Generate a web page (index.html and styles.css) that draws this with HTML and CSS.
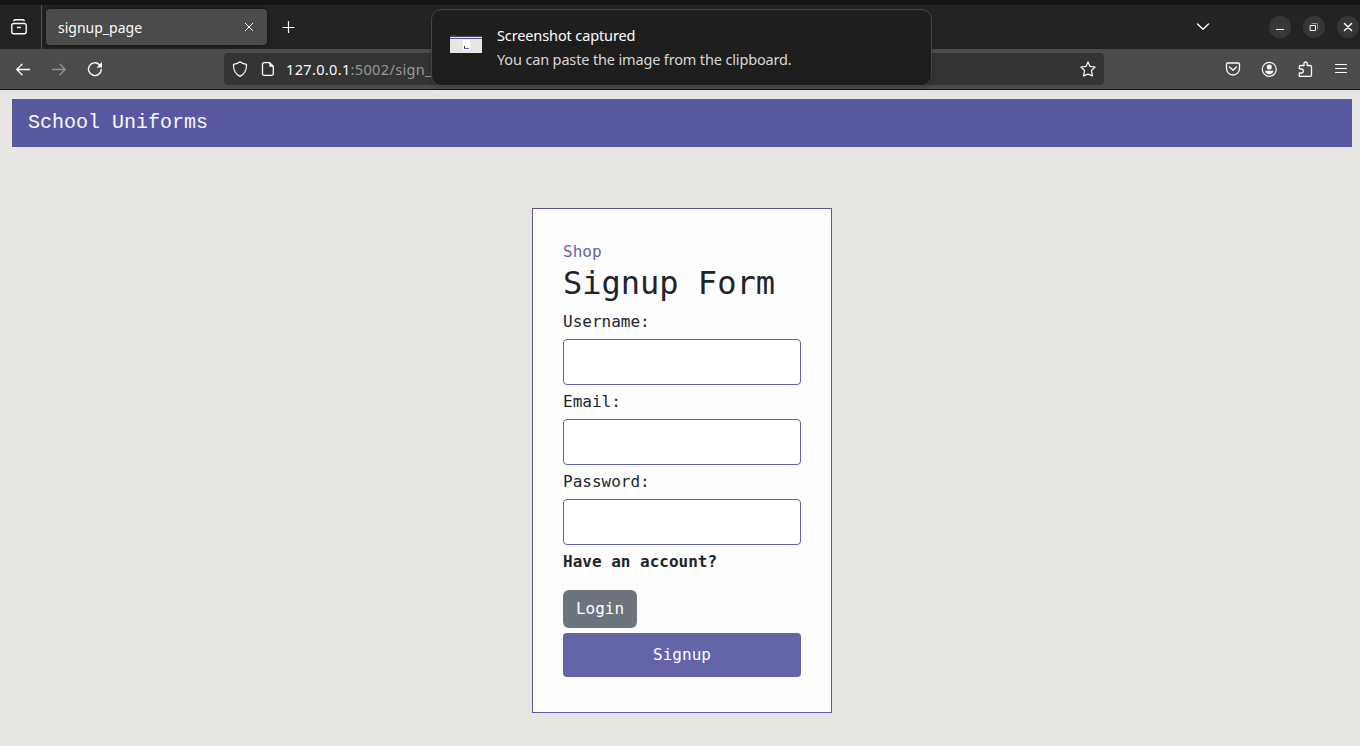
FILE: index.html
```html
<!DOCTYPE html>
<html lang="en">
<head>
<meta charset="utf-8">
<title>signup_page</title>
<link rel="stylesheet" href="styles.css">
</head>
<body>
<div class="window">
  <div class="desktop-edge"></div>
  <div class="tabbar">
    <div class="tab-overview">
      <svg class="icon" width="18" height="18" viewBox="0 0 18 18"><path d="M3.800 5.500h10.400a2 2 0 0 1 2 2v6.300a2 2 0 0 1-2 2H3.800a2 2 0 0 1-2-2V7.500a2 2 0 0 1 2-2z" stroke-width="1.400"/><path d="M3.800 2.700c.3-.6.800-.9 1.500-.9h7.400c.7 0 1.200.3 1.500.9M7.500 9.500h3" stroke-width="1.400"/></svg>
    </div>
    <div class="tab">
      <span class="tab-title">signup_page</span>
      <svg class="icon" width="10" height="10" viewBox="0 0 10 10"><path d="M1.300 1.300l7.400 7.400M8.700 1.300L1.300 8.700" stroke-width="1"/></svg>
    </div>
    <svg class="icon new-tab" width="14" height="14" viewBox="0 0 14 14"><path d="M6.500 1.500v11M1 7.500h11" stroke-width="1.200"/></svg>
    <div class="spacer"></div>
    <svg class="icon tab-list" width="14" height="10" viewBox="0 0 14 10"><path d="M1.500 2L7 7.300 12.500 2" stroke-width="1.400"/></svg>
    <div class="window-buttons">
      <span class="window-button"><svg class="icon" width="22" height="22" viewBox="0 0 22 22"><path d="M7 13.500h8" stroke-linecap="butt"/></svg></span>
      <span class="window-button"><svg class="icon" width="22" height="22" viewBox="0 0 22 22"><path d="M9 7.500h5.500V13" class="dim"/><path d="M7.500 9.500h5v5h-5z" stroke-linejoin="miter"/></svg></span>
      <span class="window-button"><svg class="icon" width="22" height="22" viewBox="0 0 22 22"><path d="M7.500 7.500l7 7M14.500 7.500l-7 7" stroke-width="1.500"/></svg></span>
    </div>
  </div>
  <div class="toolbar">
    <div class="nav-buttons">
      <svg class="icon" width="16" height="16" viewBox="0 0 16 16"><path d="M14.500 8.500H1.800M7 3.300L1.700 8.500 7 13.700" stroke-width="1.300"/></svg>
      <svg class="icon disabled" width="16" height="16" viewBox="0 0 16 16"><path d="M1.500 8.500h12.700M9 3.300l5.300 5.200L9 13.700" stroke-width="1.300"/></svg>
      <svg class="icon" width="16" height="16" viewBox="0 0 16 16"><path d="M14.300 8.500A6.400 6.400 0 1 1 12.300 3.500" stroke-width="1.400"/><path d="M15 1v5.500H9.500z" class="solid"/></svg>
    </div>
    <div class="urlbar">
      <svg class="icon" width="16" height="16" viewBox="0 0 16 16"><path d="M8 .8c1.600 1.500 3.800 2.200 6.500 2.500C14.700 9 12.700 13.200 8 15.400 3.300 13.200 1.300 9 1.500 3.300 4.200 3 6.400 2.300 8 .8z" stroke-width="1.200"/></svg>
      <svg class="icon page-icon" width="14" height="16" viewBox="0 0 14 16"><path d="M3 1.700h5.700l3.600 3.600v7.500a1.500 1.500 0 0 1-1.500 1.500H3a1.500 1.500 0 0 1-1.500-1.500V3.200A1.500 1.500 0 0 1 3 1.700z" stroke-width="1.300"/><path d="M8.300 1.500l4.200 4.200H8.300z" class="solid"/></svg>
      <span class="url">127.0.0.1<span class="url-path">:5002/sign_up</span></span>
      <svg class="icon" width="18" height="18" viewBox="0 0 18 18"><path d="M9 1.900l2 4.500 5.100.6-3.700 3.500 1 5.400L9 14.100l-4.400 1.800 1-5.400L1.900 7l5.100-.6z" stroke-width="1.200"/></svg>
    </div>
    <div class="tool-buttons">
      <svg class="icon" width="16" height="16" viewBox="0 0 16 16"><path d="M2.700 2h10.600a1.200 1.200 0 0 1 1.200 1.200v4.300a6.500 6.500 0 0 1-13 0V3.200A1.200 1.200 0 0 1 2.700 2zM4.500 6L8 9.300 11.500 6" stroke-width="1.300"/></svg>
      <svg class="icon" width="16" height="16" viewBox="0 0 16 16"><circle cx="8.300" cy="8.300" r="7" stroke-width="1.200"/><circle cx="8.300" cy="6" r="2.600" class="solid"/><path d="M4.200 9.700h8.200C12.200 12 10.600 13.200 8.300 13.200S4.400 12 4.200 9.700z" class="solid"/></svg>
      <svg class="icon" width="16" height="16" viewBox="0 0 16 16"><path d="M2.300 7.500V5.700c0-.7.400-1.200 1.200-1.200H7V2.600a1.600 1.600 0 0 1 3.200 0v1.900h3c.8 0 1.300.5 1.300 1.200v8.400c0 .8-.5 1.200-1.300 1.200H2.300v-3.300h2a2 2 0 0 0 0-4z" stroke-width="1.300"/></svg>
      <svg class="icon" width="16" height="16" viewBox="0 0 16 16"><path d="M2.500 3.500h11M2.500 7.500h11M2.500 11.500h11" stroke-width="1.200"/></svg>
    </div>
  </div>
  <div class="page">
    <nav class="navbar">School Uniforms</nav>
    <form class="card">
      <a class="shop-link">Shop</a>
      <h2 class="heading">Signup Form</h2>
      <label class="label" for="username">Username:</label>
      <input class="field" id="username" type="text">
      <label class="label" for="email">Email:</label>
      <input class="field" id="email" type="email">
      <label class="label" for="password">Password:</label>
      <input class="field" id="password" type="password">
      <p class="question">Have an account?</p>
      <button class="login" type="button">Login</button>
      <button class="signup" type="button">Signup</button>
    </form>
  </div>
  <div class="notification">
    <svg class="thumbnail" width="32" height="18" viewBox="0 0 32 18" shape-rendering="crispEdges"><rect width="32" height="18" fill="#e8e6e2"/><rect width="32" height="2" fill="#242424"/><rect y="1" width="32" height="1" fill="#444"/><rect x="1" width="5" height="1" fill="#4b4b4b"/><rect y="3" width="32" height="1" fill="#5959a2"/><rect x="13" y="5" width="7" height="10" fill="#fff"/><rect x="14" y="11" width="1" height="2" fill="#29313a"/><rect x="14" y="13" width="5" height="1" fill="#6464a8"/></svg>
    <div class="notification-text">
      <div class="notification-title">Screenshot captured</div>
      <div class="notification-body">You can paste the image from the clipboard.</div>
    </div>
  </div>
</div>
</body>
</html>
```
FILE: styles.css
```css
* { box-sizing: border-box; }
body { margin: 0; }

.window {
  position: relative;
  display: flex;
  flex-direction: column;
  height: 746px;
  overflow: hidden;
  background: #e8e6e2;
  font-family: "Noto Sans", "Open Sans", sans-serif;
  color: #fbfbfe;
}
.desktop-edge { height: 5px; background: #141414; }
.icon {
  display: block;
  flex: none;
  fill: none;
  stroke: #fbfbfe;
  stroke-linecap: round;
  stroke-linejoin: round;
}
.icon .solid { fill: #fbfbfe; stroke: none; }
.icon .dim { stroke: #8c8c8c; }
.icon.disabled { opacity: .4; }
.spacer { flex: 1; }

.tabbar {
  display: flex;
  align-items: center;
  height: 44px;
  background: #232323;
}
.tab-overview {
  display: flex;
  align-items: center;
  width: 42px;
  height: 44px;
  padding-left: 10px;
  border-right: 1px solid #555;
}
.tab {
  display: flex;
  align-items: center;
  justify-content: space-between;
  width: 221px;
  height: 36px;
  margin-left: 4px;
  padding: 0 13px 0 12px;
  border-radius: 4px;
  background: #4b4b4b;
  box-shadow: 0 0 4px rgba(0, 0, 0, .5);
}
.tab-title { padding-top: 1px; font-size: 14px; }
.new-tab { margin-left: 15px; }
.tab-list { margin-right: 59px; }
.window-buttons { display: flex; gap: 12px; padding-right: 1px; }
.window-button { display: block; border-radius: 50%; background: #373737; }

.toolbar {
  display: flex;
  align-items: center;
  height: 41px;
  background: #4b4b4b;
  border-bottom: 1px solid #1c1520;
}
.nav-buttons { display: flex; gap: 20px; padding-left: 15px; }
.urlbar {
  display: flex;
  align-items: center;
  width: 880px;
  height: 32px;
  margin-left: 121px;
  padding: 0 7px 0 8px;
  border-radius: 4px;
  background: #343434;
}
.page-icon { margin-left: 13px; }
.url { flex: 1; padding-left: 11px; font-size: 14.5px; letter-spacing: .35px; }
.url-path { color: #98989b; }
.tool-buttons { display: flex; gap: 20px; margin-left: 121px; }

.page { flex: 1; padding: 9px 8px 0 12px; }
.navbar {
  height: 48px;
  padding-left: 16px;
  background: #5959a2;
  color: #f8f9fa;
  font: 20px/48px "Liberation Mono", monospace;
}
.card {
  display: flex;
  flex-direction: column;
  width: 300px;
  height: 505px;
  margin: 61px auto 0;
  padding: 31px 30px 30px;
  border: 1px solid #5959a2;
  background: #fdfdfd;
  color: #212529;
  font: 16px/24px "DejaVu Sans Mono", monospace;
}
.shop-link { color: #6464a8; }
.heading { margin: 0 0 8px; font-size: 32px; line-height: 38px; font-weight: 400; }
.field {
  width: 100%;
  height: 46px;
  margin: 5px 0;
  border: 1px solid #6464a8;
  border-radius: 4px;
  background: #fff;
}
.question { margin: 0 0 16px; font-weight: 700; }
.login, .signup { padding: 0; border: 0; color: #fff; font: inherit; }
.login { width: 74px; height: 38px; border-radius: 6px; background: #6c757d; }
.signup { height: 44px; margin-top: 5px; border-radius: 4px; background: #6464a8; }

.notification {
  position: absolute;
  top: 9px;
  left: 431px;
  display: flex;
  align-items: center;
  width: 501px;
  height: 77px;
  padding-left: 18px;
  border: 1px solid #464646;
  border-radius: 10px;
  background: #1e1e1e;
  box-shadow: 0 1px 4px rgba(0, 0, 0, .2);
}
.thumbnail { display: block; margin-top: -8px; }
.notification-text { padding: 0 0 2px 15px; font-size: 14.5px; line-height: 24px; }
.notification-title { color: #fff; letter-spacing: -.12px; }
.notification-body { color: #d8d8d8; letter-spacing: -.15px; }
```
